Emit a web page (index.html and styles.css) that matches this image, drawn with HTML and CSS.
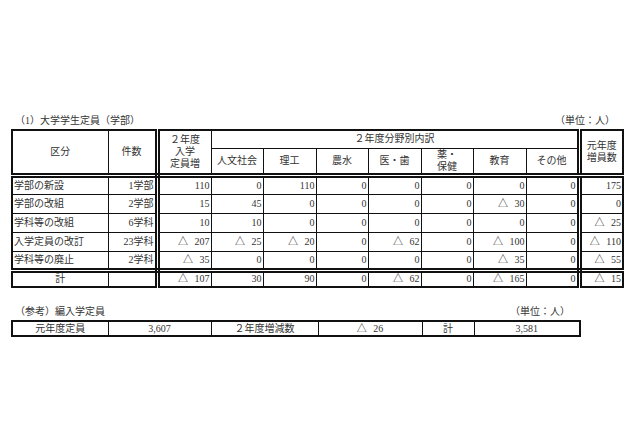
FILE: index.html
```html
<!DOCTYPE html>
<html lang="ja">
<head>
<meta charset="utf-8">
<title>大学学生定員（学部）</title>
<link rel="stylesheet" href="styles.css">
</head>
<body>
<div class="page">
  <div class="caption cap-main"><span>（1）大学学生定員（学部）</span><span>（単位：人）</span></div>
  <table class="grid main">
    <colgroup>
      <col style="width:96px"><col style="width:49px"><col style="width:54px"><col style="width:52px"><col style="width:53px"><col style="width:52px"><col style="width:53px"><col style="width:52px"><col style="width:53px"><col style="width:53px"><col style="width:44px">
    </colgroup>
    <thead>
      <tr class="h1">
        <th rowspan="2" class="hb">区分</th>
        <th rowspan="2" class="hb dr">件数</th>
        <th rowspan="2" class="hb">２年度<br>入学<br>定員増</th>
        <th colspan="7" class="span dr">２年度分野別内訳</th>
        <th rowspan="2" class="hb">元年度<br>増員数</th>
      </tr>
      <tr class="h2">
        <th class="hb">人文社会</th>
        <th class="hb">理工</th>
        <th class="hb">農水</th>
        <th class="hb">医・歯</th>
        <th class="hb">薬・<br>保健</th>
        <th class="hb">教育</th>
        <th class="hb dr">その他</th>
      </tr>
    </thead>
    <tbody>
      <tr><td class="lbl">学部の新設</td><td class="num dr">1学部</td><td class="num">110</td><td class="num">0</td><td class="num">110</td><td class="num">0</td><td class="num">0</td><td class="num">0</td><td class="num">0</td><td class="num dr">0</td><td class="num">175</td></tr>
      <tr><td class="lbl">学部の改組</td><td class="num dr">2学部</td><td class="num">15</td><td class="num">45</td><td class="num">0</td><td class="num">0</td><td class="num">0</td><td class="num">0</td><td class="num">△ 30</td><td class="num dr">0</td><td class="num">0</td></tr>
      <tr><td class="lbl">学科等の改組</td><td class="num dr">6学科</td><td class="num">10</td><td class="num">10</td><td class="num">0</td><td class="num">0</td><td class="num">0</td><td class="num">0</td><td class="num">0</td><td class="num dr">0</td><td class="num">△ 25</td></tr>
      <tr><td class="lbl">入学定員の改訂</td><td class="num dr">23学科</td><td class="num">△ 207</td><td class="num">△ 25</td><td class="num">△ 20</td><td class="num">0</td><td class="num">△ 62</td><td class="num">0</td><td class="num">△ 100</td><td class="num dr">0</td><td class="num">△ 110</td></tr>
      <tr class="last"><td class="lbl">学科等の廃止</td><td class="num dr">2学科</td><td class="num">△ 35</td><td class="num">0</td><td class="num">0</td><td class="num">0</td><td class="num">0</td><td class="num">0</td><td class="num">△ 35</td><td class="num dr">0</td><td class="num">△ 55</td></tr>
      <tr class="total"><td class="ctr">計</td><td class="num dr"></td><td class="num">△ 107</td><td class="num">30</td><td class="num">90</td><td class="num">0</td><td class="num">△ 62</td><td class="num">0</td><td class="num">△ 165</td><td class="num dr">0</td><td class="num">△ 15</td></tr>
    </tbody>
  </table>

  <div class="caption cap-ref"><span>（参考）編入学定員</span><span>（単位：人）</span></div>
  <table class="grid ref">
    <colgroup>
      <col style="width:96px"><col style="width:103px"><col style="width:107px"><col style="width:104px"><col style="width:52px"><col style="width:106px">
    </colgroup>
    <tbody>
      <tr><td>元年度定員</td><td>3,607</td><td>２年度増減数</td><td>△ 26</td><td>計</td><td>3,581</td></tr>
    </tbody>
  </table>
</div>
</body>
</html>
```

FILE: styles.css
```css
html, body {
  margin: 0;
  padding: 0;
  background: #fff;
}

body {
  font-family: "Liberation Serif", "Noto Sans CJK JP", serif;
  font-size: 10px;
  color: #333;
}

.page {
  padding: 114px 0 0 11px;
}

.caption {
  display: flex;
  justify-content: space-between;
  line-height: 13px;
  height: 15px;
  box-sizing: border-box;
}

.cap-main {
  width: 611px;
  padding: 0 7px 0 4px;
}

.cap-ref {
  width: 568px;
  padding: 0 9px 0 4px;
  margin-top: 17px;
}

.grid {
  border-collapse: collapse;
  table-layout: fixed;
  border: 2px solid #111;
}

.main {
  width: 611px;
}

.grid th,
.grid td {
  border: 1.5px solid #111;
  padding: 0 1px;
  font-weight: normal;
  line-height: 12px;
  white-space: nowrap;
  overflow: hidden;
  word-spacing: 4px;
}

.grid th {
  text-align: center;
  vertical-align: middle;
}

.h1 {
  height: 18px;
}

.h2 {
  height: 22px;
}

.main .span {
  text-align: center;
  padding-right: 0;
}

.main .hb {
  border-bottom: 5px double #111;
}

.main .dr {
  border-right: 5px double #111;
}

.main tbody tr {
  height: 19px;
}

.main tbody tr.total {
  height: 17px;
}

.main tr.last td {
  border-bottom: 5px double #111;
}

.lbl {
  text-align: left;
}

.num {
  text-align: right;
}

.ctr {
  text-align: center;
}

.ref {
  width: 568px;
}

.ref td {
  text-align: center;
  height: 13px;
}
```
